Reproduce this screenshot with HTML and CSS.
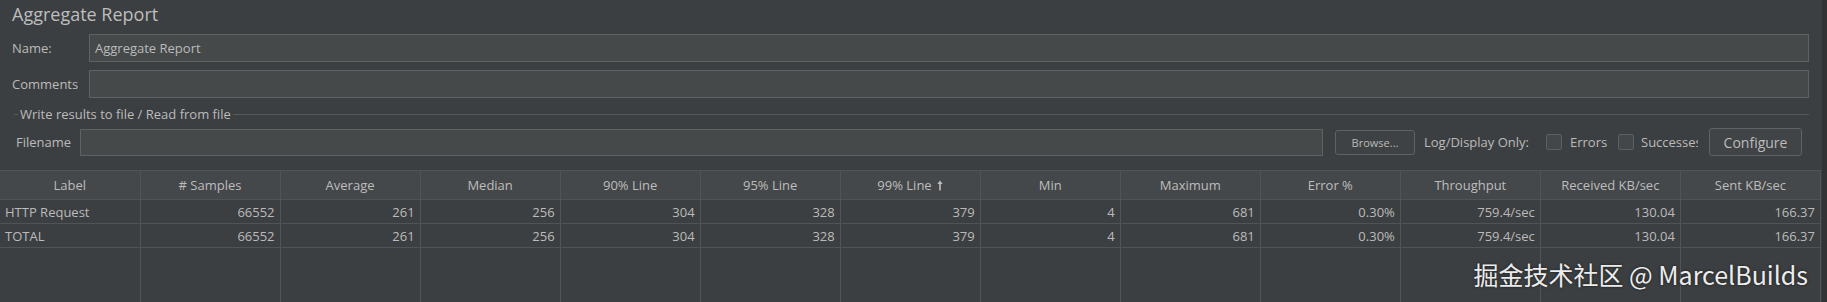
FILE: index.html
```html
<!DOCTYPE html>
<html lang="en">
<head>
    <meta charset="UTF-8">
    <title>Aggregate Report</title>
    <link rel="stylesheet" href="styles.css">
</head>
<body>
    <div class="panel">
        <div class="form">
            <div class="title">Aggregate Report</div>

            <div class="form-row">
                <label class="row-label">Name:</label>
                <div class="text-input">Aggregate Report</div>
            </div>
            <div class="form-row comments">
                <label class="row-label">Comments</label>
                <div class="text-input"></div>
            </div>

            <div class="group-title"><span>Write results to file / Read from file</span></div>

            <div class="file-row">
                <label class="file-label">Filename</label>
                <div class="text-input file-input"></div>
                <button class="btn browse">Browse...</button>
                <span class="log-label">Log/Display Only:</span>
                <span class="check errors"><i class="box"></i>Errors</span>
                <span class="check successes"><i class="box"></i><span class="clip">Successes</span></span>
                <button class="btn configure">Configure</button>
            </div>
        </div>

        <table class="results">
            <thead>
                <tr>
                    <th>Label</th>
                    <th># Samples</th>
                    <th>Average</th>
                    <th>Median</th>
                    <th>90% Line</th>
                    <th>95% Line</th>
                    <th>99% Line <svg class="sort" width="6" height="11" viewBox="0 0 6 11"><path d="M3 0.5 L5.6 4 L3.8 4 L3.8 10.5 L2.2 10.5 L2.2 4 L0.4 4 Z" fill="#bdbdbd"/></svg></th>
                    <th>Min</th>
                    <th>Maximum</th>
                    <th>Error %</th>
                    <th>Throughput</th>
                    <th>Received KB/sec</th>
                    <th>Sent KB/sec</th>
                </tr>
            </thead>
            <tbody>
                <tr>
                    <td class="name">HTTP Request</td>
                    <td>66552</td>
                    <td>261</td>
                    <td>256</td>
                    <td>304</td>
                    <td>328</td>
                    <td>379</td>
                    <td>4</td>
                    <td>681</td>
                    <td>0.30%</td>
                    <td>759.4/sec</td>
                    <td>130.04</td>
                    <td>166.37</td>
                </tr>
                <tr>
                    <td class="name">TOTAL</td>
                    <td>66552</td>
                    <td>261</td>
                    <td>256</td>
                    <td>304</td>
                    <td>328</td>
                    <td>379</td>
                    <td>4</td>
                    <td>681</td>
                    <td>0.30%</td>
                    <td>759.4/sec</td>
                    <td>130.04</td>
                    <td>166.37</td>
                </tr>
                <tr class="filler">
                    <td></td><td></td><td></td><td></td><td></td><td></td><td></td>
                    <td></td><td></td><td></td><td></td><td></td><td></td>
                </tr>
            </tbody>
        </table>

        <div class="watermark">掘金技术社区 @ MarcelBuilds</div>
    </div>
</body>
</html>
```

FILE: styles.css
```css
* {
    margin: 0;
    padding: 0;
    box-sizing: border-box;
}

body {
    background: #3c3f41;
    color: #bbbbbb;
    font-family: 'Open Sans', 'Noto Sans', sans-serif;
    font-size: 13px;
    overflow: hidden;
}

.panel {
    width: 1827px;
    height: 302px;
    background: #3c3f41;
    border-right: 5px solid #313335;
    position: relative;
    overflow: hidden;
}

.form {
    padding: 0 13px 0 12px;
}

.title {
    font-size: 18px;
    line-height: 24px;
    padding-top: 2px;
    height: 34px;
    color: #bdbdbd;
}

.form-row {
    display: flex;
    align-items: center;
    height: 28px;
}

.form-row.comments {
    margin-top: 8px;
}

.row-label {
    width: 77px;
    flex-shrink: 0;
}

.text-input {
    flex: 1;
    height: 28px;
    background: #45494a;
    border: 1px solid #5f6263;
    padding: 0 5px;
    line-height: 26px;
    color: #bbbbbb;
}

.group-title {
    display: flex;
    align-items: center;
    height: 16px;
    margin: 8px 0 0 2px;
}

.group-title::before {
    content: '';
    width: 4px;
    border-top: 1px solid #56595b;
}

.group-title::after {
    content: '';
    flex: 1;
    border-top: 1px solid #56595b;
}

.group-title span {
    padding: 0 2px;
}

.file-row {
    display: flex;
    align-items: center;
    height: 28px;
    margin-top: 6px;
    padding: 0 7px 0 4px;
}

.file-label {
    width: 64px;
    flex-shrink: 0;
}

.file-input {
    height: 27px;
}

.btn {
    background: #3f4244;
    border: 1px solid #5f6263;
    border-radius: 3px;
    color: #bbbbbb;
    font-family: inherit;
    flex-shrink: 0;
}

.browse {
    width: 80px;
    height: 25px;
    margin-left: 12px;
    font-size: 11px;
}

.log-label {
    width: 122px;
    margin-left: 9px;
    flex-shrink: 0;
}

.check {
    display: flex;
    align-items: center;
    gap: 8px;
    flex-shrink: 0;
}

.check .box {
    width: 16px;
    height: 16px;
    border: 1px solid #5c5f61;
    border-radius: 2px;
    background: #43474a;
}

.errors {
    width: 72px;
}

.successes {
    gap: 7px;
}

.clip {
    width: 57px;
    overflow: hidden;
    white-space: nowrap;
}

.configure {
    width: 93px;
    height: 28px;
    margin-left: 11px;
    font-size: 14px;
    background: #414446;
}

.results {
    margin-top: 14px;
    width: 1821px;
    table-layout: fixed;
    border-collapse: collapse;
}

.results th,
.results td {
    width: 140px;
    border-right: 1px solid #515456;
    border-bottom: 1px solid #515456;
    white-space: nowrap;
    overflow: hidden;
}

.results th {
    height: 29px;
    background: #45484a;
    font-weight: normal;
    text-align: center;
    color: #bdbdbd;
    border-top: 1px solid #515456;
}

.results td {
    height: 24px;
    text-align: right;
    padding: 0 5px;
}

.results td.name {
    text-align: left;
}

.results .filler td {
    height: 60px;
    border-bottom: none;
}

.sort {
    vertical-align: -1px;
    margin-left: 2px;
}

.watermark {
    position: absolute;
    right: 14px;
    top: 257px;
    font-family: 'Noto Sans CJK SC', 'Noto Sans', sans-serif;
    font-size: 25px;
    line-height: 34px;
    color: #ececec;
    text-shadow: 0 0 3px rgba(0, 0, 0, 0.6);
}
```
